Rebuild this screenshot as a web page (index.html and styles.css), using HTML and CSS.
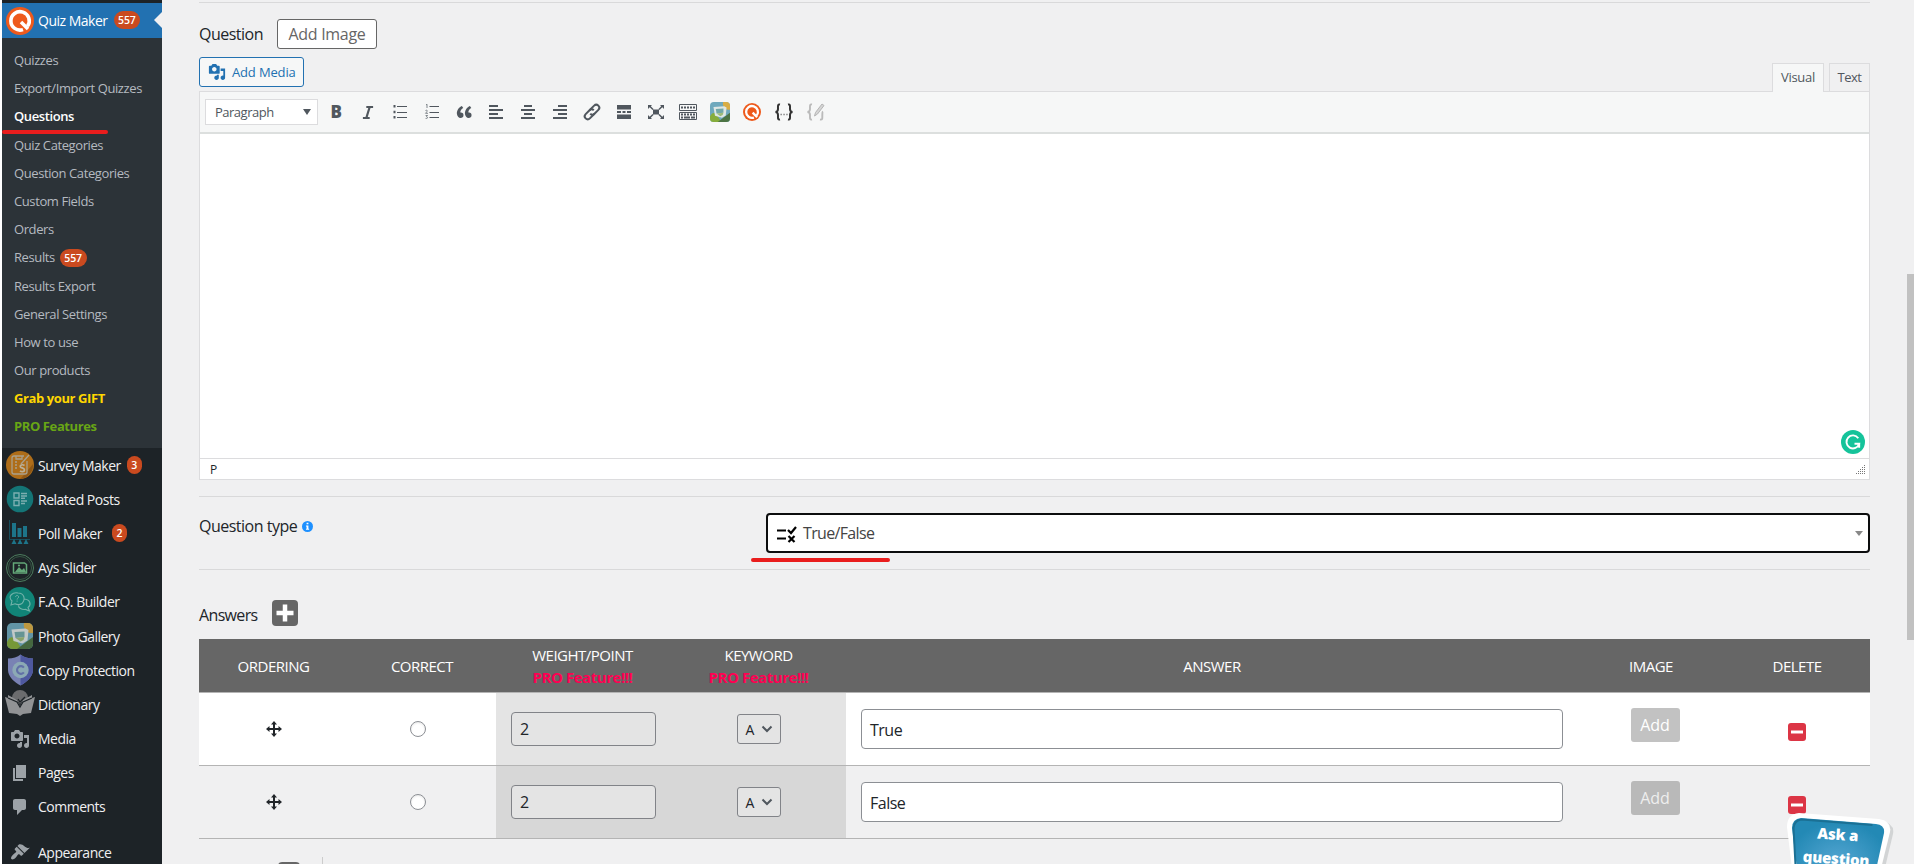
FILE: index.html
```
<!DOCTYPE html>
<html lang="en">
<head>
    <meta charset="UTF-8">
    <meta name="viewport" content="width=device-width, initial-scale=1.0">
    <title>Quiz Maker - Edit Question</title>
    <link rel="stylesheet" href="styles.css">
</head>
<body>
    <!-- Shared icons -->
    <svg class="defs" width="0" height="0">
        <symbol id="i-media" viewBox="0 0 20 20"><path d="M13 11V4c0-.55-.45-1-1-1h-1.670L9 1H5L3.670 3H2c-.55 0-1 .45-1 1v7c0 .55.45 1 1 1h10c.55 0 1-.45 1-1zM7 4.500c1.380 0 2.500 1.120 2.500 2.500S8.380 9.500 7 9.500 4.500 8.380 4.500 7 5.620 4.500 7 4.500zM14 6h5v10.500c0 1.380-1.120 2.500-2.500 2.500S14 17.880 14 16.500s1.120-2.500 2.500-2.500c.170 0 .340.020.500.050V9h-3V6zm-4 8.050V13h2v3.500c0 1.380-1.120 2.500-2.500 2.500S7 17.880 7 16.500 8.120 14 9.500 14c.170 0 .340.020.500.050z"/></symbol>
        <symbol id="i-quiz" viewBox="0 0 28 28"><circle cx="14" cy="14" r="14" fill="#ee5a1c"/><path d="M17 22.600a9.200 9.200 0 1 1 4.500-3.300" fill="none" stroke="#fff" stroke-width="3.600"/><path d="M15 15l7 7" stroke="#fff" stroke-width="3.600"/></symbol>
        <symbol id="i-gallery" viewBox="0 0 26 26">
            <rect width="26" height="26" rx="5" fill="#6fa9bd"/>
            <path d="M17 0h4a5 5 0 0 1 5 5v5a8 8 0 0 1-9-10z" fill="#d9ad45"/>
            <path d="M0 19c3-7 7-6 11 1l4 6H5a5 5 0 0 1-5-5z" fill="#86ad3c"/>
            <path d="M10 26l16-12v7a5 5 0 0 1-5 5z" fill="#4c7444"/>
            <path d="M4.500 6.500l14-1 3 1.500-1 10.500-5 3-9-2.500z" fill="#dfe7e4"/>
            <path d="M7.500 9l10-.5v5.500l-9 1z" fill="#72a8a8"/>
            <path d="M8.500 15l9-1-1 3-3 1.500z" fill="#9dbb78"/>
        </symbol>
        <symbol id="i-move" viewBox="0 0 16 16"><path d="M8 0l3 3.500H9v3.500h3.500V5L16 8l-3.500 3V9H9v3.500h2L8 16l-3-3.500h2V9H3.500v2L0 8l3.500-3v2H7V3.500H5z"/></symbol>
        <symbol id="i-delete" viewBox="0 0 18 18"><rect width="18" height="18" rx="3" fill="#dc3545"/><path d="M3 9h12" stroke="#fff" stroke-width="3"/></symbol>
    </svg>

    <div class="page">
        <div class="sidebar">
            <div class="menu-item current">
                <svg class="logo"><use href="#i-quiz"/></svg>
                <span>Quiz Maker</span><span class="count">557</span>
            </div>
            <ul class="submenu">
                <li>Quizzes</li>
                <li>Export/Import Quizzes</li>
                <li class="active">Questions</li>
                <li>Quiz Categories</li>
                <li>Question Categories</li>
                <li>Custom Fields</li>
                <li>Orders</li>
                <li>Results <span class="count">557</span></li>
                <li>Results Export</li>
                <li>General Settings</li>
                <li>How to use</li>
                <li>Our products</li>
                <li class="gift">Grab your GIFT</li>
                <li class="pro">PRO Features</li>
            </ul>
            <div class="menu-item">
                <svg class="logo" viewBox="0 0 28 28"><circle cx="14" cy="14" r="14" fill="#ae6d19"/><path d="M17 25l10-12a14 14 0 0 1-13 15z" fill="#8d5714"/><path d="M18 5H8a2 2 0 0 0-2 2v14a2 2 0 0 0 2 2h11a2 2 0 0 0 2-2V10M10 5h6v3h-6zM9 11h2M9 14h2M9 17h2M15 13l8-9" fill="none" stroke="#aaa08b" stroke-width="1.300"/><path d="M18.500 14.500c-2-1.500-5-.5-4 1.500.8 1.200 4 .8 4 3s-3 2-4.500.8" fill="none" stroke="#bbb199" stroke-width="1.700"/></svg>
                <span>Survey Maker</span><span class="count">3</span>
            </div>
            <div class="menu-item">
                <svg class="logo" viewBox="0 0 28 28"><circle cx="14" cy="14" r="13.300" fill="#147576"/><path d="M8 8h5v5H8zM8 15.500h5v5H8zM15 8.500h6M15 11h6M15 13.300h4M15 16h6M15 18.500h4" fill="none" stroke="#7caeb0" stroke-width="1.400"/></svg>
                <span>Related Posts</span>
            </div>
            <div class="menu-item">
                <svg class="logo" viewBox="0 0 28 28"><path d="M3.500 1v19.500H24" fill="none" stroke="#174d5b" stroke-width="1"/><path d="M6 4h4v14H6zM11.500 9h4v9h-4zM17 7h4v11h-4zM8 20l2.500 5h-5zM14 20l2.500 5h-5zM20 20l2.500 5h-5z" fill="#1d7489"/></svg>
                <span>Poll Maker</span><span class="count spaced">2</span>
            </div>
            <div class="menu-item">
                <svg class="logo" viewBox="0 0 28 28"><circle cx="14" cy="14" r="13.500" fill="none" stroke="#4d7d5e" stroke-width="1"/><circle cx="14" cy="14" r="11.500" fill="none" stroke="#365844" stroke-width="1"/><path d="M7.500 9h11l2 1.500V19h-13z" fill="#1d2327" stroke="#63a778" stroke-width="1.500"/><path d="M9 18l4-5 3 3 2-2 2 4z" fill="#63a778"/><circle cx="13" cy="11.500" r="1.100" fill="#63a778"/></svg>
                <span>Ays Slider</span>
            </div>
            <div class="menu-item">
                <svg class="logo faq" viewBox="0 0 30 30"><circle cx="15" cy="15" r="15" fill="#118477"/><path d="M17 16.500c-2 1.200-5 1.300-7 .3L6 18l1-4C2 9 8 5 13 6c6 0 8 6 4 10.500zM19.500 12c6 .5 7 6 3.500 8.500l1.500 3.500-4-1.600c-4 .5-7-1.400-7-4" fill="none" stroke="#72b2a9" stroke-width="1.100"/><path d="M10.600 10c0-2 3-2 3 0 0 1.300-1.500 1.200-1.500 2.500M12.100 13.600v1" fill="none" stroke="#72b2a9" stroke-width="1"/></svg>
                <span>F.A.Q. Builder</span>
            </div>
            <div class="menu-item">
                <svg class="logo gallery"><use href="#i-gallery"/></svg>
                <span>Photo Gallery</span>
            </div>
            <div class="menu-item">
                <svg class="logo shield" viewBox="0 0 26 32"><path d="M13 0c3 3 8 4 13 4v12c0 7-7 13-13 16C7 29 0 23 0 16V4c5 0 10-1 13-4z" fill="#7982b4"/><path d="M13 0c3 3 8 4 13 4v12c0 7-7 13-13 16z" fill="#4e589f"/><circle cx="13" cy="16" r="8.500" fill="#8ca9b5"/><path d="M16.500 13.500a4 4 0 1 0 0 5" fill="none" stroke="#6270a7" stroke-width="2.200"/></svg>
                <span>Copy Protection</span>
            </div>
            <div class="menu-item">
                <svg class="logo faq" viewBox="0 0 30 30"><path d="M7 9a8 8 0 0 1 16 0l-5 2-3 4-3-4z" fill="#6b6c6e"/><path d="M0 8l3 1v-3l9 5 3 6 3-6 9-5v3l3-1-4 16-8 1-3 2-3-2-8-1z" fill="#919395"/><path d="M3 9l9 4 3 5 3-5 9-4M13 10l2 3 5-5" fill="none" stroke="#1d2327" stroke-width="1.300"/></svg>
                <span>Dictionary</span>
            </div>
            <div class="menu-item">
                <svg class="dash"><use href="#i-media"/></svg>
                <span>Media</span>
            </div>
            <div class="menu-item">
                <svg class="dash" viewBox="0 0 20 20"><path d="M6 15V2h10v13H6zm-1 1h8v2H3V5h2v11z"/></svg>
                <span>Pages</span>
            </div>
            <div class="menu-item">
                <svg class="dash" viewBox="0 0 20 20"><path d="M5 2h9c1.100 0 2 .9 2 2v7c0 1.100-.9 2-2 2h-2l-5 5v-5H5c-1.100 0-2-.9-2-2V4c0-1.100.9-2 2-2z"/></svg>
                <span>Comments</span>
            </div>
            <div class="menu-item after-separator">
                <svg class="dash" viewBox="0 0 20 20"><path d="M14.480 11.060L7.410 3.990l1.500-1.500c.500-.560 2.300-.470 3.510.320 1.210.800 1.430 1.280 2.910 2.100 1.180.640 2.450 1.260 4.450.850zm-.710.710L6.700 4.700 4.930 6.470c-.390.390-.390 1.020 0 1.410l1.060 1.060c.390.390.390 1.030 0 1.420-.600.600-1.430 1.110-2.210 1.690-.350.260-.700.530-1.010.840C1.430 14.230.400 16.080 1.400 17.070c.990 1 2.840-.030 4.180-1.360.310-.310.580-.660.850-1.020.570-.780 1.080-1.610 1.690-2.210.390-.390 1.020-.390 1.410 0l1.060 1.060c.390.390 1.020.390 1.410 0z"/></svg>
                <span>Appearance</span>
            </div>
            <div class="marker marker-menu"></div>
        </div>

        <div class="content">
            <div class="question-head">
                <span class="label">Question</span>
                <button class="add-image">Add Image</button>
            </div>

            <div class="editor-tools">
                <button class="add-media"><svg><use href="#i-media"/></svg>Add Media</button>
                <div class="tabs">
                    <span class="tab selected">Visual</span>
                    <span class="tab">Text</span>
                </div>
            </div>
            <div class="editor">
                <div class="toolbar">
                    <div class="format">Paragraph<i class="caret"></i></div>
                    <span class="tool bold">B</span>
                    <svg class="tool" viewBox="0 0 20 20"><path d="M8.300 5h6.800M4.900 16h6.800M11.700 5L8.300 16" fill="none" stroke="#50575e" stroke-width="2.200"/></svg>
                    <svg class="tool" viewBox="0 0 20 20"><path d="M7 4.500h10M7 10.500h10M7 15.500h10" stroke="#50575e" stroke-width="1.200"/><path d="M3.500 3h2v2.500h-2zM3.500 8.800h2v2.500h-2zM3.500 14h2v2.500h-2z"/></svg>
                    <svg class="tool" viewBox="0 0 20 20"><path d="M7.500 4.500H17M7.500 10.500H17M7.500 15.500H17" stroke="#50575e" stroke-width="1.200"/><path d="M4 3l1-.8V6M3.500 8.500c2-1 2.500.5 0 2.800H6M3.600 13.500h2l-1.200 1.200c2 .3 1.300 2.300-.8 1.700" fill="none" stroke="#73797f" stroke-width=".9"/></svg>
                    <svg class="tool" viewBox="0 0 20 20"><path d="M9.490 13.220c0-.740-.200-1.380-.610-1.900-.620-.780-1.830-.880-2.530-.720-.290-1.650 1.110-3.750 2.920-4.650L7.880 4c-2.730 1.300-5.420 4.280-4.960 8.050C3.210 14.430 4.590 16 6.540 16c.850 0 1.560-.250 2.120-.750s.830-1.180.830-2.030zm8.050 0c0-.740-.200-1.380-.610-1.900-.630-.780-1.830-.880-2.530-.720-.290-1.650 1.110-3.750 2.920-4.650L15.930 4c-2.730 1.300-5.410 4.280-4.950 8.050.290 2.380 1.660 3.950 3.610 3.950.850 0 1.560-.250 2.120-.750s.830-1.180.830-2.030z"/></svg>
                    <svg class="tool" viewBox="0 0 20 20"><path d="M3 3h9v2H3zM3 7h14v2H3zM3 11h9v2H3zM3 15h14v2H3z"/></svg>
                    <svg class="tool" viewBox="0 0 20 20"><path d="M6 3h8v2H6zM3 7h14v2H3zM6 11h8v2H6zM3 15h14v2H3z"/></svg>
                    <svg class="tool" viewBox="0 0 20 20"><path d="M8 3h9v2H8zM3 7h14v2H3zM8 11h9v2H8zM3 15h14v2H3z"/></svg>
                    <svg class="tool" viewBox="0 0 20 20"><g transform="rotate(-45 10 10)" fill="none" stroke="#50575e" stroke-width="2"><path d="M10.500 13H4a3 3 0 0 1 0-6h5.500a3 3 0 0 1 3 3"/><path d="M9.500 7H16a3 3 0 0 1 0 6h-5.500a3 3 0 0 1-3-3"/></g></svg>
                    <svg class="tool" viewBox="0 0 20 20"><path d="M3 3h14v4.500H3zM3 9h4v2H3zM8.500 9h3v2h-3zM13 9h4v2h-4zM3 12.500h14V17H3z"/></svg>
                    <svg class="tool" viewBox="0 0 20 20"><path d="M7 7.500h6v5H7zM2 3h4L4.800 4.200 7.500 7l-1 1-2.800-2.800L2 7zM18 3h-4l1.200 1.200L12.500 7l1 1 2.800-2.800L18 7zM2 17h4l-1.200-1.200L7.500 13l-1-1-2.800 2.800L2 13zM18 17h-4l1.200-1.200-2.700-2.800 1-1 2.800 2.800L18 13z"/></svg>
                    <svg class="tool" viewBox="0 0 20 20"><path d="M1.500 2.500h17v6h-17zM1.500 10.500h17v7h-17z" fill="none" stroke="#50575e"/><path d="M3 5.500h14M3 12.500h14" stroke="#50575e" stroke-width="2" stroke-dasharray="2 1"/><path d="M3 15.500h2M6 15.500h6M13 15.500h4" stroke="#50575e" stroke-width="2"/></svg>
                    <svg class="tool"><use href="#i-gallery"/></svg>
                    <svg class="tool quiz"><use href="#i-quiz"/></svg>
                    <svg class="tool" viewBox="0 0 20 20"><path d="M6 2.500C3.500 2 4 4 4 7 4 9 3.500 9.800 1.500 10c2 .2 2.500 1 2.500 3 0 3-.5 5 2 4.500M14 2.500c2.500-.5 2 1.500 2 4.500 0 2 .5 2.800 2.500 3-2 .2-2.500 1-2.500 3 0 3 .5 5-2 4.500" fill="none" stroke="#333" stroke-width="2"/><path d="M6.500 12.500h1.300M9.400 12.500h1.300M12.300 12.500h1.300" stroke="#777" stroke-width="1.300"/></svg>
                    <svg class="tool" viewBox="0 0 20 20"><path d="M6 2.500C3.500 2 4 4 4 7 4 9 3.500 9.800 1.500 10c2 .2 2.500 1 2.500 3 0 3-.5 5 2 4.500M17 9.500c-1 .5-.5 2-.7 4 0 3 .5 4.500-2.300 4" fill="none" stroke="#bbb" stroke-width="1.900"/><path d="M8.500 14l1-3.500 6.500-8.500 2 1.500-6.500 8.500z" fill="#d5d5d5" stroke="#b5b5b5"/></svg>
                </div>
                <div class="editor-body">
                    <svg class="grammar" viewBox="0 0 24 24"><circle cx="12" cy="12" r="12" fill="#15c39a"/><path d="M17.300 8.200a6.500 6.500 0 1 0 .9 5.500h-4.700M18.200 13.500v4.300" fill="none" stroke="#fff" stroke-width="1.900"/></svg>
                </div>
                <div class="statusbar">
                    <span>P</span>
                    <svg width="10" height="10" viewBox="0 0 10 10"><path d="M8.500 1v9M6.500 3v7M4.500 5v5M2.500 7v3M.5 9v1" stroke="#777" stroke-dasharray="1 1"/></svg>
                </div>
            </div>

            <div class="type-row">
                <div class="label type-label">Question type
                    <svg class="info" viewBox="0 0 12 12"><circle cx="6" cy="6" r="6" fill="#1e90ff"/><path d="M5 2h2v1.600H5zM4.300 4.800H7v3.600h.8v1.200H4.300V8.400H5V6h-.7z" fill="#fff"/></svg>
                </div>
                <div class="type-select">
                    <svg width="20" height="17" viewBox="0 0 20 17"><path d="M0 4.500h9M0 12.500h9" stroke="#000" stroke-width="2"/><path d="M11 4l3 3 5-6M11.500 10l6 6M17.500 10l-6 6" fill="none" stroke="#000" stroke-width="2.200"/></svg>
                    <span>True/False</span>
                    <i class="caret"></i>
                    <div class="marker marker-type"></div>
                </div>
            </div>

            <div class="answers-head">
                <span class="label">Answers</span>
                <svg width="26" height="26" viewBox="0 0 26 26"><rect width="26" height="26" rx="4" fill="#666"/><path d="M4.500 13h17M13 4.500v17" stroke="#fff" stroke-width="4.500"/></svg>
            </div>
            <table class="answers">
                <colgroup>
                    <col class="c-order"><col class="c-correct"><col class="c-pro"><col class="c-pro"><col><col class="c-image"><col class="c-delete">
                </colgroup>
                <thead>
                    <tr>
                        <th>ORDERING</th>
                        <th>CORRECT</th>
                        <th>WEIGHT/POINT<b>PRO Feature!!!</b></th>
                        <th>KEYWORD<b>PRO Feature!!!</b></th>
                        <th>ANSWER</th>
                        <th>IMAGE</th>
                        <th>DELETE</th>
                    </tr>
                </thead>
                <tbody>
                    <tr>
                        <td class="order"><svg class="move"><use href="#i-move"/></svg></td>
                        <td class="correct"><i class="radio"></i></td>
                        <td class="locked"><div class="weight">2</div></td>
                        <td class="locked"><div class="keyword">A<svg width="12" height="8" viewBox="0 0 12 8"><path d="M1.500 1.500L6 6l4.500-4.500"/></svg></div></td>
                        <td><div class="answer">True</div></td>
                        <td class="image"><button class="add">Add</button></td>
                        <td><svg class="delete"><use href="#i-delete"/></svg></td>
                    </tr>
                    <tr>
                        <td class="order"><svg class="move"><use href="#i-move"/></svg></td>
                        <td class="correct"><i class="radio"></i></td>
                        <td class="locked"><div class="weight">2</div></td>
                        <td class="locked"><div class="keyword">A<svg width="12" height="8" viewBox="0 0 12 8"><path d="M1.500 1.500L6 6l4.500-4.500"/></svg></div></td>
                        <td><div class="answer">False</div></td>
                        <td class="image"><button class="add">Add</button></td>
                        <td><svg class="delete"><use href="#i-delete"/></svg></td>
                    </tr>
                </tbody>
            </table>
            <div class="below">
                <i class="next-add"></i>
                <i class="divider"></i>
            </div>
        </div>
    </div>

    <div class="scroll-thumb"></div>
    <div class="ask">
        <svg width="110" height="80" viewBox="0 0 110 80">
            <defs>
                <radialGradient id="askFill" cx="50%" cy="60%" r="55%"><stop offset="0" stop-color="#55a6d2"/><stop offset="1" stop-color="#2389b5"/></radialGradient>
            </defs>
            <path d="M14 2l80 6q14 2 12 13L92 80H10L1 15Q1 3 14 2z" fill="#d2d4d5"/>
            <path d="M12 0l80 6q13 2 11 13L88 80H8L0 14Q0 1 12 0z" fill="#fff"/>
            <path d="M14 5l75 6q9 1 8 9L84 80H13L5 15q0-9 9-10z" fill="url(#askFill)"/>
            <path d="M10 80L6.500 15q1-8 8-8.500l71 5.500" fill="none" stroke="#1b7094" stroke-width="2"/>
        </svg>
        <div class="ask-text">Ask a<br>question</div>
    </div>
</body>
</html>
```
FILE: styles.css
```
* {
    box-sizing: border-box;
}
body {
    margin: 0;
    height: 864px;
    overflow: hidden;
    background: #f0f0f1;
    color: #212529;
    font-family: "Open Sans", "Noto Sans", sans-serif;
    font-size: 16px;
    letter-spacing: -0.5px;
}
.defs {
    position: absolute;
}
button {
    font-family: inherit;
    letter-spacing: inherit;
    padding: 0;
}
.page {
    display: flex;
    height: 864px;
    overflow: hidden;
    border-left: 2px solid #fff;
}

/* Admin menu */
.sidebar {
    position: relative;
    width: 160px;
    height: 864px;
    flex-shrink: 0;
    padding-top: 3px;
    overflow: hidden;
    background: #1d2327;
    color: #f0f0f1;
    font-size: 14px;
}
.menu-item {
    display: flex;
    align-items: center;
    height: 34.2px;
}
.menu-item svg {
    flex-shrink: 0;
    fill: #9ca2a7;
}
.menu-item.current {
    position: relative;
    height: 35px;
    background: #2271b1;
    color: #fff;
}
.menu-item.current > span {
    margin-top: -1px;
}
.menu-item.current::after {
    content: "";
    position: absolute;
    right: 0;
    top: 9px;
    border: 8px solid transparent;
    border-left: 0;
    border-right-color: #f0f0f1;
}
.menu-item.after-separator {
    margin-top: 11px;
}
.menu-item .logo {
    width: 28px;
    height: 28px;
    margin: 0 4px;
}
.menu-item .logo.faq {
    width: 30px;
    height: 30px;
    margin: 0 3px;
}
.menu-item .logo.gallery {
    width: 26px;
    height: 26px;
    margin: 0 5px;
    opacity: .85;
}
.menu-item .logo.shield {
    width: 25px;
    height: 32px;
    margin: 0 5px 0 6px;
}
.menu-item .dash {
    width: 20px;
    height: 20px;
    margin: 0 8px;
}
.count {
    display: inline-block;
    min-width: 15px;
    height: 18px;
    margin-left: 6px;
    padding: 0 4.5px;
    border-radius: 9px;
    background: #ca4a1f;
    color: #fff;
    font-size: 10.5px;
    font-weight: 600;
    line-height: 18px;
    text-align: center;
    letter-spacing: -0.1px;
}
.count.spaced {
    margin-left: 10px;
}
.submenu {
    height: 410px;
    margin: 0;
    padding: 8px 0 0 12px;
    list-style: none;
    background: #2c3338;
    color: #b5bac0;
    font-size: 13px;
    letter-spacing: -0.4px;
}
.submenu li {
    height: 28.2px;
    line-height: 28.2px;
    white-space: nowrap;
}
.submenu .count {
    margin-left: 2px;
}
.submenu .active {
    color: #fff;
    font-weight: 600;
}
.submenu .gift {
    color: #ffd700;
    font-weight: 700;
}
.submenu .pro {
    color: #68a615;
    font-weight: 700;
}
.marker {
    position: absolute;
    height: 4px;
    border-radius: 2px;
    background: #e91d1d;
}
.marker-menu {
    left: 0;
    top: 130px;
    width: 106px;
}
.marker-type {
    left: -17px;
    top: 43px;
    width: 139px;
}

/* Question editor */
.content {
    width: 1671px;
    margin: 2px 0 0 37px;
    border-top: 1px solid #d9d9da;
}
.label {
    line-height: 24px;
}
.question-head {
    display: flex;
    align-items: center;
    gap: 14px;
    height: 30px;
    margin-top: 16px;
}
.question-head .label {
    width: 64px;
}
.add-image {
    width: 100px;
    height: 30px;
    border: 1px solid #666;
    border-radius: 3px;
    background: #fff;
    color: #666;
    font-size: 16px;
    letter-spacing: -0.3px;
}
.editor-tools {
    display: flex;
    justify-content: space-between;
    height: 42px;
    padding-top: 8px;
}
.add-media {
    display: flex;
    align-items: center;
    gap: 6px;
    width: 105px;
    height: 30px;
    padding-left: 8px;
    border: 1px solid #2271b1;
    border-radius: 3px;
    background: #f6f7f7;
    color: #2271b1;
    font-size: 13px;
    letter-spacing: -0.15px;
}
.add-media svg {
    width: 18px;
    height: 18px;
    fill: #2271b1;
}
.tabs {
    display: flex;
    gap: 5px;
    padding-top: 6px;
}
.tab {
    width: 41px;
    height: 28px;
    border: 1px solid #dcdcde;
    border-bottom: 0;
    color: #50575e;
    font-size: 13px;
    line-height: 27px;
    text-align: center;
}
.tab.selected {
    position: relative;
    width: 52px;
    height: 29px;
    background: #f6f7f7;
    letter-spacing: -0.3px;
}
.editor {
    height: 389px;
    border: 1px solid #dcdcde;
    background: #fff;
}
.toolbar {
    display: flex;
    align-items: center;
    gap: 12px;
    height: 42px;
    padding-left: 5px;
    border-bottom: 2px solid #dcdfde;
    background: #f6f7f7;
}
.format {
    display: flex;
    align-items: center;
    justify-content: space-between;
    width: 113px;
    height: 26px;
    margin-right: -4px;
    padding: 0 6px 0 9px;
    border: 1px solid #dcdcde;
    background: #fff;
    color: #50575e;
    font-size: 13px;
}
.caret {
    border: 4px solid transparent;
    border-top: 6px solid #50575e;
    border-bottom: 0;
}
.tool {
    width: 20px;
    height: 20px;
    fill: #50575e;
}
.tool.quiz {
    padding: 1px;
}
.tool.bold {
    color: #50575e;
    font-size: 17px;
    font-weight: 800;
    line-height: 20px;
    text-align: center;
}
.editor-body {
    display: flex;
    align-items: flex-end;
    justify-content: flex-end;
    height: 324px;
    padding: 0 4px 4px 0;
}
.grammar {
    width: 24px;
    height: 24px;
}
.statusbar {
    display: flex;
    align-items: center;
    justify-content: space-between;
    height: 21px;
    padding: 0 3px 0 10px;
    border-top: 1px solid #dcdcde;
    font-size: 12px;
}

/* Question type */
.type-row {
    display: flex;
    justify-content: space-between;
    height: 74px;
    margin-top: 16px;
    padding-top: 16px;
    border-top: 1px solid #d9d9da;
    border-bottom: 1px solid #d9d9da;
}
.type-label {
    display: flex;
    align-items: center;
    gap: 5px;
    height: 25px;
}
.info {
    width: 11px;
    height: 11px;
    margin-top: 2px;
}
.type-select {
    position: relative;
    display: flex;
    align-items: center;
    gap: 6px;
    width: 1104px;
    height: 40px;
    padding: 0 5px 0 9px;
    border: 2px solid #0c0d0e;
    border-radius: 4px;
    background: #fff;
    color: #444;
    letter-spacing: -0.65px;
}
.type-select svg {
    margin-top: 3px;
}
.type-select .caret {
    margin-left: auto;
    border-top-width: 5px;
    border-top-color: #888;
}

/* Answers */
.answers-head {
    display: flex;
    align-items: center;
    height: 26px;
    margin: 30px 0 13px;
}
.answers-head .label {
    width: 73px;
    padding-top: 3px;
    letter-spacing: -0.65px;
}
.answers {
    width: 1671px;
    table-layout: fixed;
    border-collapse: separate;
    border-spacing: 0;
}
.c-order { width: 151px; }
.c-correct { width: 146px; }
.c-pro { width: 175px; }
.c-image { width: 146px; }
.c-delete { width: 146px; }
.answers th {
    height: 54px;
    padding: 0;
    border-bottom: 1px solid #b4b4b4;
    background: #666;
    color: #fff;
    font-size: 15px;
    font-weight: 400;
    line-height: 22px;
}
.answers th:nth-child(-n+3) {
    padding-right: 2px;
}
.answers th b {
    display: block;
    color: #ff0052;
    font-size: 15px;
    letter-spacing: -0.45px;
}
.answers td {
    height: 73px;
    padding: 0;
    border-bottom: 1px solid #b4b4b4;
    text-align: center;
}
.answers tbody tr:first-child {
    background: #fff;
}
.answers td.locked {
    background: #e4e4e4;
}
.answers tr:last-child td.locked {
    background: #d7d7d7;
}
.answers td.order {
    padding-right: 1px;
}
.answers td.correct {
    padding-right: 11px;
}
.answers td svg {
    display: block;
    margin: 0 auto;
}
.move {
    width: 16px;
    height: 16px;
    fill: #212529;
}
.answers td .delete {
    width: 18px;
    height: 18px;
    margin-top: 6px;
}
.radio {
    display: block;
    width: 16px;
    height: 16px;
    margin: 0 auto;
    border: 1px solid #8c8f94;
    border-radius: 50%;
    background: #fff;
    box-shadow: inset 0 1px 2px rgba(0,0,0,0.1);
}
.weight {
    width: 145px;
    height: 34px;
    margin-left: 15px;
    padding-left: 8px;
    border: 1px solid #818388;
    border-radius: 4px;
    background: #e4e4e4;
    line-height: 33px;
    text-align: left;
}
.keyword {
    display: flex;
    align-items: center;
    width: 44px;
    height: 30px;
    margin: 0 auto;
    padding: 0 7px 0 8px;
    border: 1px solid #818388;
    border-radius: 3px;
    background: #e4e4e4;
    font-size: 14px;
}
.answers .keyword svg {
    margin-right: 0;
    fill: none;
    stroke: #50575e;
    stroke-width: 2;
}
.answer {
    height: 40px;
    margin: 0 15px;
    padding-left: 8px;
    border: 1px solid #8c8f94;
    border-radius: 4px;
    background: #fff;
    line-height: 40px;
    text-align: left;
}
.answers td.image {
    padding: 0 0 8px 8px;
}
.add {
    width: 49px;
    height: 34px;
    border: 0;
    border-radius: 3px;
    background: #c2c2c2;
    color: #fff;
    font-size: 16px;
    letter-spacing: 0;
}
tr:last-child .add {
    background: #b9b9b9;
    color: #eee;
}
.below {
    display: flex;
    gap: 22px;
    margin-top: 18px;
    padding-left: 79px;
}
.next-add {
    width: 22px;
    height: 22px;
    margin-top: 5px;
    border-radius: 4px;
    background: #666;
}
.divider {
    width: 1px;
    height: 30px;
    background: #ccc;
}

/* Floating pieces */
.scroll-thumb {
    position: absolute;
    right: 0;
    top: 274px;
    width: 7px;
    height: 366px;
    background: #c1c1c1;
}
.ask {
    position: absolute;
    left: 1787px;
    top: 813px;
    width: 110px;
    height: 51px;
    overflow: hidden;
}
.ask-text {
    position: absolute;
    left: 0;
    top: 9px;
    width: 100px;
    color: #fff;
    font-size: 15px;
    font-weight: 800;
    line-height: 24px;
    text-align: center;
    letter-spacing: -0.2px;
    transform: rotate(4deg);
}
```
